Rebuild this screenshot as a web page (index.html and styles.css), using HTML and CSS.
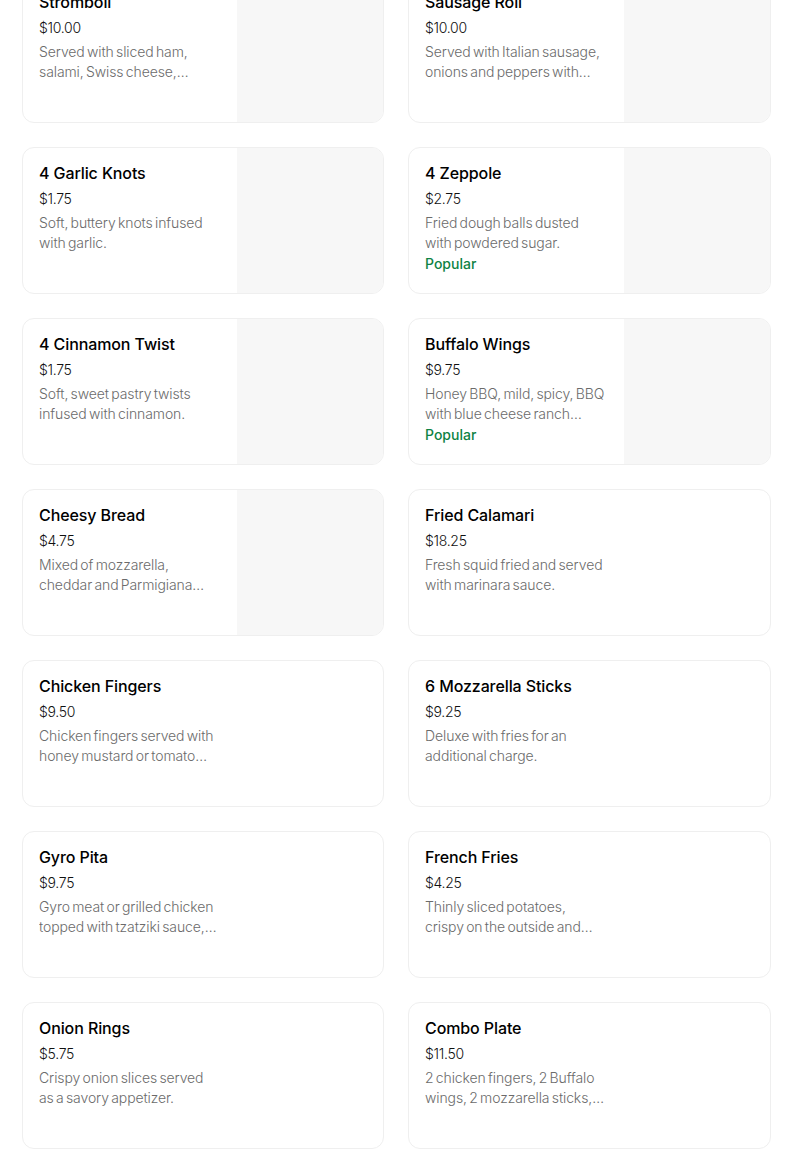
FILE: index.html
```html
<!DOCTYPE html>
<html lang="en">
<head>
<meta charset="utf-8">
<title>Menu</title>
<link rel="stylesheet" href="styles.css">
</head>
<body>
<div class="grid">
  <div class="card">
    <div class="info">
      <div class="title">Stromboli</div>
      <div class="price">$10.00</div>
      <div class="desc">Served with sliced ham, salami, Swiss cheese, provolone and mozzarella.</div>
    </div>
    <div class="thumb"></div>
  </div>
  <div class="card">
    <div class="info">
      <div class="title">Sausage Roll</div>
      <div class="price">$10.00</div>
      <div class="desc">Served with Italian sausage, onions and peppers with mozzarella.</div>
    </div>
    <div class="thumb"></div>
  </div>

  <div class="card">
    <div class="info">
      <div class="title">4 Garlic Knots</div>
      <div class="price">$1.75</div>
      <div class="desc">Soft, buttery knots infused with garlic.</div>
    </div>
    <div class="thumb"></div>
  </div>
  <div class="card">
    <div class="info">
      <div class="title">4 Zeppole</div>
      <div class="price">$2.75</div>
      <div class="desc">Fried dough balls dusted with powdered sugar.</div>
      <div class="tag">Popular</div>
    </div>
    <div class="thumb"></div>
  </div>

  <div class="card">
    <div class="info">
      <div class="title">4 Cinnamon Twist</div>
      <div class="price">$1.75</div>
      <div class="desc">Soft, sweet pastry twists infused with cinnamon.</div>
    </div>
    <div class="thumb"></div>
  </div>
  <div class="card">
    <div class="info">
      <div class="title">Buffalo Wings</div>
      <div class="price">$9.75</div>
      <div class="desc">Honey BBQ, mild, spicy, BBQ with blue cheese ranch dressing.</div>
      <div class="tag">Popular</div>
    </div>
    <div class="thumb"></div>
  </div>

  <div class="card">
    <div class="info">
      <div class="title">Cheesy Bread</div>
      <div class="price">$4.75</div>
      <div class="desc">Mixed of mozzarella, cheddar and Parmigiana cheese.</div>
    </div>
    <div class="thumb"></div>
  </div>
  <div class="card">
    <div class="info">
      <div class="title">Fried Calamari</div>
      <div class="price">$18.25</div>
      <div class="desc">Fresh squid fried and served with marinara sauce.</div>
    </div>
    <div class="thumb empty"></div>
  </div>

  <div class="card">
    <div class="info">
      <div class="title">Chicken Fingers</div>
      <div class="price">$9.50</div>
      <div class="desc">Chicken fingers served with honey mustard or tomato sauce.</div>
    </div>
    <div class="thumb empty"></div>
  </div>
  <div class="card">
    <div class="info">
      <div class="title">6 Mozzarella Sticks</div>
      <div class="price">$9.25</div>
      <div class="desc">Deluxe with fries for an additional charge.</div>
    </div>
    <div class="thumb empty"></div>
  </div>

  <div class="card">
    <div class="info">
      <div class="title">Gyro Pita</div>
      <div class="price">$9.75</div>
      <div class="desc">Gyro meat or grilled chicken topped with tzatziki sauce, lettuce and tomato.</div>
    </div>
    <div class="thumb empty"></div>
  </div>
  <div class="card">
    <div class="info">
      <div class="title">French Fries</div>
      <div class="price">$4.25</div>
      <div class="desc">Thinly sliced potatoes, crispy on the outside and fluffy inside.</div>
    </div>
    <div class="thumb empty"></div>
  </div>

  <div class="card">
    <div class="info">
      <div class="title">Onion Rings</div>
      <div class="price">$5.75</div>
      <div class="desc">Crispy onion slices served as a savory appetizer.</div>
    </div>
    <div class="thumb empty"></div>
  </div>
  <div class="card">
    <div class="info">
      <div class="title">Combo Plate</div>
      <div class="price">$11.50</div>
      <div class="desc">2 chicken fingers, 2 Buffalo wings, 2 mozzarella sticks, and fries.</div>
    </div>
    <div class="thumb empty"></div>
  </div>
</div>
</body>
</html>
```
FILE: styles.css
```css
html, body {
  margin: 0;
  padding: 0;
  background: #ffffff;
}
body {
  font-family: Inter, "Noto Sans", "Liberation Sans", sans-serif;
  color: #000000;
  overflow: hidden;
}
.grid {
  display: grid;
  grid-template-columns: 362px 363px;
  column-gap: 24px;
  row-gap: 24px;
  margin: -24px 0 0 22px;
}
.card {
  display: grid;
  grid-template-columns: 1fr 146px;
  height: 147px;
  box-sizing: border-box;
  border: 1px solid #efefef;
  border-radius: 12px;
  overflow: hidden;
  background: #ffffff;
}
.info {
  padding: 15px 17.5px 16px 16px;
  min-width: 0;
}
.title {
  font-size: 16px;
  line-height: 20px;
  font-weight: 500;
  letter-spacing: -0.1px;
}
.price {
  margin-top: 6px;
  font-size: 14px;
  line-height: 20px;
  font-weight: 300;
  letter-spacing: -0.3px;
  color: #111111;
}
.desc {
  margin-top: 4px;
  font-size: 14px;
  line-height: 20px;
  font-weight: 300;
  color: #6b6b6b;
  letter-spacing: -0.1px;
  word-spacing: -1.5px;
  display: -webkit-box;
  -webkit-line-clamp: 2;
  -webkit-box-orient: vertical;
  overflow: hidden;
}
.tag {
  margin-top: 1px;
  font-size: 14px;
  line-height: 20px;
  font-weight: 500;
  color: #0e8345;
}
.thumb {
  background: #f7f7f7;
}
.thumb.empty {
  background: transparent;
}
```
